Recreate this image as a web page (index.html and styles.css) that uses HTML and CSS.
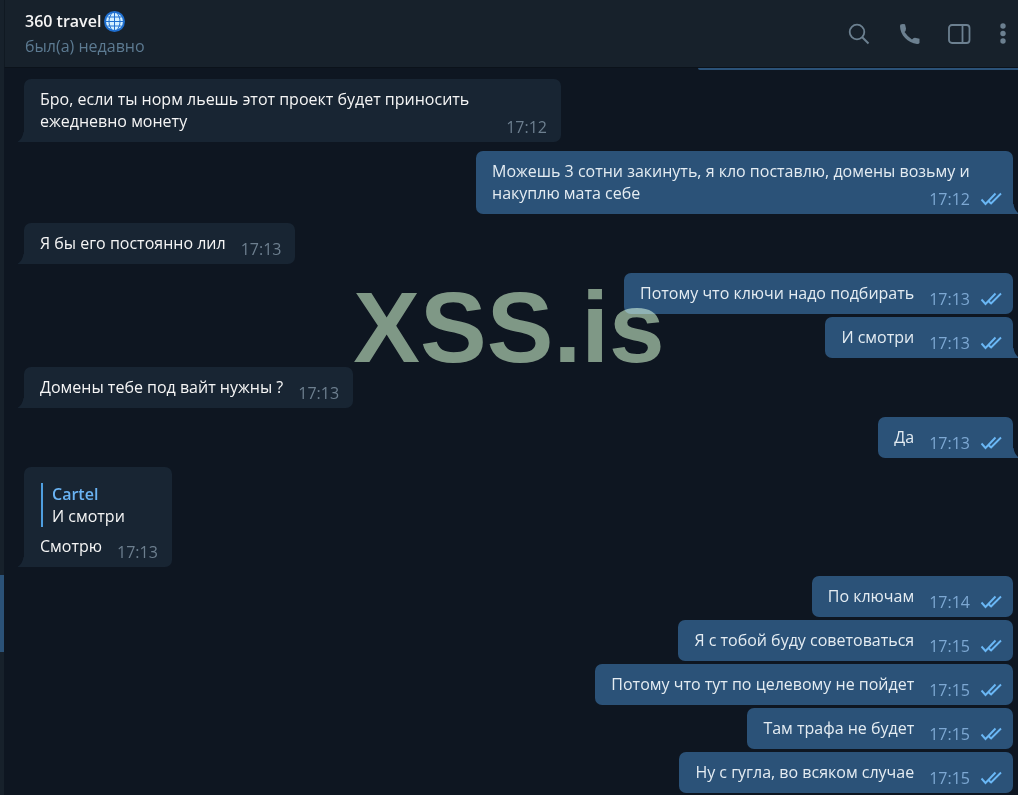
FILE: index.html
```html
<!DOCTYPE html>
<html lang="ru">
<head>
    <meta charset="UTF-8">
    <meta name="viewport" content="width=device-width, initial-scale=1.0">
    <title>360 travel</title>
    <link rel="stylesheet" href="styles.css">
</head>
<body>
    <svg class="defs" aria-hidden="true">
        <symbol id="checks" viewBox="0 0 22 14">
            <path d="M1.500 7.500l4 4.500L15.500 1.500M10.500 12L21 1.500M9 9.500l2 2" fill="none" stroke="currentColor" stroke-width="1.900"/>
        </symbol>
        <symbol id="tail" viewBox="0 0 8 10">
            <path d="M8 0v10H0.500Q5.500 7 6.500 0z" fill="currentColor"/>
        </symbol>
    </svg>

    <aside class="dialogs">
        <div class="dialog"></div>
        <div class="dialog"></div>
        <div class="dialog"></div>
        <div class="dialog"></div>
        <div class="dialog"></div>
        <div class="dialog"></div>
        <div class="dialog"></div>
        <div class="dialog selected"></div>
    </aside>

    <div class="chat">
        <header class="top-bar">
            <div class="contact">
                <h1>360 travel
                    <svg class="globe" viewBox="0 0 21 21" aria-hidden="true">
                        <circle cx="10.5" cy="10.5" r="10.5" fill="#1f6fd0"/>
                        <circle cx="10.5" cy="10.5" r="8.500" fill="#d3efff"/>
                        <path d="M10.500 2v17M2 10.500h17M3.500 6h14M3.500 15h14M8 2c-4 5-4 12 0 17M13 2c4 5 4 12 0 17" fill="none" stroke="#1f6fd0"/>
                    </svg>
                </h1>
                <p>был(а) недавно</p>
            </div>
            <div class="actions">
                <button type="button" aria-label="Поиск">
                    <svg width="22" height="22" viewBox="0 0 22 22"><circle cx="9" cy="9" r="7.3" fill="none" stroke="currentColor" stroke-width="1.8"/><path d="M14 14l6.5 6.5" stroke="currentColor" stroke-width="2"/></svg>
                </button>
                <button type="button" aria-label="Позвонить">
                    <svg width="22" height="22" viewBox="0 0 22 22"><path d="M2.500 1.500Q4 .7 7 1.200L8 5.500Q8 8 6.500 9Q9.500 13.500 14 16.500Q15.500 14.600 17 14.800L21.500 15.800V20Q21 21 19 20.900C10 20 2 12 2 3Z" fill="currentColor"/></svg>
                </button>
                <button type="button" aria-label="Боковая панель">
                    <svg width="24" height="22" viewBox="0 0 24 22"><rect x="1" y="2" width="20.500" height="18" rx="3" fill="none" stroke="currentColor" stroke-width="1.800"/><path d="M14.500 2v18" stroke="currentColor" stroke-width="1.800"/></svg>
                </button>
                <button type="button" aria-label="Меню">
                    <svg width="6" height="22" viewBox="0 0 6 22"><g fill="currentColor"><circle cx="3" cy="3" r="2.700"/><circle cx="3" cy="10.500" r="2.700"/><circle cx="3" cy="18" r="2.700"/></g></svg>
                </button>
            </div>
        </header>

        <main class="messages">
            <div class="previous"></div>

            <div class="message in last">
                <p>Бро, если ты норм льешь этот проект будет приносить ежедневно монету <time>17:12</time></p>
                <svg class="tail"><use href="#tail"/></svg>
            </div>
            <div class="message out last">
                <p>Можешь 3 сотни закинуть, я кло поставлю, домены возьму и накуплю мата себе <time>17:12 <svg class="checks"><use href="#checks"/></svg></time></p>
                <svg class="tail"><use href="#tail"/></svg>
            </div>
            <div class="message in last">
                <p>Я бы его постоянно лил <time>17:13</time></p>
                <svg class="tail"><use href="#tail"/></svg>
            </div>
            <div class="message out">
                <p>Потому что ключи надо подбирать <time>17:13 <svg class="checks"><use href="#checks"/></svg></time></p>
            </div>
            <div class="message out last">
                <p>И смотри <time>17:13 <svg class="checks"><use href="#checks"/></svg></time></p>
                <svg class="tail"><use href="#tail"/></svg>
            </div>
            <div class="message in last">
                <p>Домены тебе под вайт нужны ? <time>17:13</time></p>
                <svg class="tail"><use href="#tail"/></svg>
            </div>
            <div class="message out last">
                <p>Да <time>17:13 <svg class="checks"><use href="#checks"/></svg></time></p>
                <svg class="tail"><use href="#tail"/></svg>
            </div>
            <div class="message in last">
                <blockquote>
                    <strong>Cartel</strong>
                    <span>И смотри</span>
                </blockquote>
                <p>Смотрю <time>17:13</time></p>
                <svg class="tail"><use href="#tail"/></svg>
            </div>
            <div class="message out">
                <p>По ключам <time>17:14 <svg class="checks"><use href="#checks"/></svg></time></p>
            </div>
            <div class="message out">
                <p>Я с тобой буду советоваться <time>17:15 <svg class="checks"><use href="#checks"/></svg></time></p>
            </div>
            <div class="message out">
                <p>Потому что тут по целевому не пойдет <time>17:15 <svg class="checks"><use href="#checks"/></svg></time></p>
            </div>
            <div class="message out">
                <p>Там трафа не будет <time>17:15 <svg class="checks"><use href="#checks"/></svg></time></p>
            </div>
            <div class="message out">
                <p>Ну с гугла, во всяком случае <time>17:15 <svg class="checks"><use href="#checks"/></svg></time></p>
            </div>
        </main>
    </div>

    <div class="watermark">XSS.is</div>
</body>
</html>
```
FILE: styles.css
```css
* {
    box-sizing: border-box;
}
body {
    position: relative;
    display: flex;
    min-height: 100vh;
    margin: 0;
    background: #0e1621;
    color: #f5f5f5;
    font-family: "Open Sans", "Noto Sans", sans-serif;
    font-size: 16px;
    line-height: 22px;
    overflow-x: hidden;
}
h1, p, blockquote {
    margin: 0;
}
.defs {
    position: absolute;
    width: 0;
    height: 0;
}

/* edge of the chat list */
.dialogs {
    flex: none;
    width: 4px;
    padding-top: 36px;
    background: #17212b;
}
.dialog {
    height: 77px;
}
.dialog.selected {
    background: #2b5278;
}

.chat {
    flex: 1;
    min-width: 0;
}
.top-bar {
    display: flex;
    justify-content: space-between;
    height: 68px;
    padding: 10px 12px 0 20px;
    background: #17212b;
    border-left: 1px solid #101922;
    border-bottom: 1px solid #0b121a;
}
.contact h1 {
    display: flex;
    align-items: center;
    gap: 3px;
    font-size: 16px;
    font-weight: 600;
}
.contact p {
    margin-top: 3px;
    color: #5c7a91;
}
.globe {
    width: 21px;
    height: 21px;
}
.actions {
    display: flex;
    gap: 28px;
    height: 48px;
    align-items: center;
}
.actions button {
    display: flex;
    padding: 0;
    border: 0;
    background: none;
    color: #6c8090;
    cursor: pointer;
}

.messages {
    display: flex;
    flex-direction: column;
    align-items: flex-start;
    padding: 0 5px 2px 20px;
}
.previous {
    align-self: flex-end;
    width: 320px;
    height: 2px;
    margin: 0 -5px 9px 0;
    background: #2b5278;
    border-bottom-left-radius: 8px;
}
.message {
    position: relative;
    max-width: 537px;
    margin-bottom: 3px;
    padding: 9px 14px 10px 16px;
    border-radius: 7px;
}
.message.last {
    margin-bottom: 9px;
}
.in {
    background: #182533;
    color: #f5f5f5;
}
.in.last {
    border-bottom-left-radius: 0;
}
.out {
    align-self: flex-end;
    padding-right: 11px;
    background: #2b5278;
    color: #e4ecf2;
}
.out.last {
    border-bottom-right-radius: 0;
}
.message:last-child {
    margin-bottom: 0;
}
.message time {
    float: right;
    display: flex;
    align-items: center;
    gap: 10px;
    margin: 6px 0 -6px 15px;
    color: #6d7f8f;
}
.out time {
    color: #7da8d3;
}
.checks {
    width: 22px;
    height: 14px;
    color: #6ab7f5;
}
.tail {
    position: absolute;
    bottom: 0;
    left: -7px;
    width: 8px;
    height: 10px;
    color: #182533;
}
.out .tail {
    left: auto;
    right: -7px;
    color: #2b5278;
    transform: scaleX(-1);
}
.message blockquote {
    display: flex;
    flex-direction: column;
    margin: 7px 0 8px 1px;
    padding-left: 9px;
    border-left: 2px solid #4f9fe0;
}
.message blockquote strong {
    color: #6ab3f3;
    font-weight: 600;
}

.watermark {
    position: absolute;
    top: 272px;
    left: 50%;
    color: #788e74;
    font-family: "Liberation Sans", Arial, sans-serif;
    font-size: 100px;
    font-weight: bold;
    line-height: 110px;
    transform: translateX(-50%);
    mix-blend-mode: screen;
    pointer-events: none;
}
```
